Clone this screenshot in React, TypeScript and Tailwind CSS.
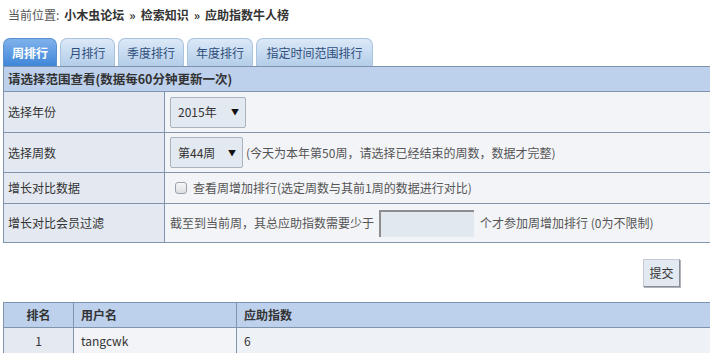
import type { ReactNode } from 'react'

const tabs = ['周排行', '月排行', '季度排行', '年度排行', '指定时间范围排行']
const tabWidths = ['w-[54px]', 'w-[55px]', 'w-[66px]', 'w-[66px]', 'w-[117px]']

function Row({ label, h, children }: { label: string; h: string; children: ReactNode }) {
  return (
    <div className={`grid grid-cols-[161px_1fr] border-b border-[#7f95ae] ${h}`}>
      <div className="flex items-center border-r border-[#7f95ae] bg-[#e4e9f1] pl-[4px] text-[#333]">
        {label}
      </div>
      <div className="flex items-center bg-[#f3f4f8] pl-[5px] text-[#555]">{children}</div>
    </div>
  )
}

function Select({ value, w, h }: { value: string; w: string; h: string }) {
  return (
    <div
      className={`flex items-center justify-between rounded-[2px] border border-[#a9b2bf] bg-[#e3e9f1] pl-[7px] pr-[6px] text-[#333] ${w} ${h}`}
    >
      <span>{value}</span>
      <span className="text-[8px] text-[#111]">▼</span>
    </div>
  )
}

export default function App() {
  return (
    <div className="h-[353px] w-[710px] overflow-hidden bg-white font-['Noto_Sans_CJK_SC','Noto_Sans',sans-serif] text-[12px]">
      {/* breadcrumb */}
      <div className="flex h-[30px] items-center pl-[8px] text-[#555]">
        当前位置:
        <span className="ml-[5px] font-bold text-[#333]">小木虫论坛</span>
        <span className="mx-[5px] font-bold text-[#333]">»</span>
        <span className="font-bold text-[#333]">检索知识</span>
        <span className="mx-[5px] font-bold text-[#333]">»</span>
        <span className="font-bold text-[#333]">应助指数牛人榜</span>
      </div>

      {/* tabs */}
      <div className="mt-[8px] flex h-[28px] items-end gap-[3px] pl-[3px]">
        {tabs.map((t, i) => (
          <div
            key={t}
            className={`flex h-[28px] items-center justify-center rounded-t-[7px] border border-b-0 ${tabWidths[i]} ${
              i === 0
                ? 'border-[#5a8fcf] bg-gradient-to-b from-[#7fb2ec] to-[#3f86d8] font-bold text-white'
                : 'border-[#a9c2de] bg-gradient-to-b from-[#dce9f7] to-[#b3cde9] text-[#2f4f7c]'
            }`}
          >
            {t}
          </div>
        ))}
      </div>

      {/* filter panel */}
      <div className="ml-[3px] w-[720px] border-l border-t border-[#7f95ae]">
        <div className="flex h-[25px] items-center border-b border-[#7f95ae] bg-[#bdd0ec] pl-[4px] text-[12.5px] font-bold text-[#333]">
          请选择范围查看(数据每60分钟更新一次)
        </div>
        <Row label="选择年份" h="h-[41px]">
          <Select value="2015年" w="w-[76px]" h="h-[31px]" />
        </Row>
        <Row label="选择周数" h="h-[40px]">
          <Select value="第44周" w="w-[73px]" h="h-[31px]" />
          <span className="ml-[3px]">(今天为本年第50周，请选择已经结束的周数，数据才完整)</span>
        </Row>
        <Row label="增长对比数据" h="h-[31px]">
          <span className="ml-[5px] mr-[6px] inline-block h-[12px] w-[12px] rounded-[3px] border border-[#9aa3ad] bg-gradient-to-b from-[#f7f7f7] to-[#dcdfe3]" />
          查看周增加排行(选定周数与其前1周的数据进行对比)
        </Row>
        <Row label="增长对比会员过滤" h="h-[39px]">
          截至到当前周，其总应助指数需要少于
          <span className="ml-[5px] mr-[6px] inline-block h-[27px] w-[95px] border-l-2 border-t-2 border-l-[#8d8d8d] border-t-[#8d8d8d] bg-[#e2e8f0]" />
          个才参加周增加排行 (0为不限制)
        </Row>
      </div>

      {/* submit */}
      <div className="mt-[16px] flex justify-end pr-[30px]">
        <button className="h-[28px] w-[37px] border border-[#c5cbd3] border-b-[#8a8f96] border-r-[#8a8f96] bg-[#e3e9f1] text-[12px] text-[#333] shadow-[1px_1px_0_#b0b4ba]">
          提交
        </button>
      </div>

      {/* ranking table */}
      <div className="ml-[3px] mt-[15px] w-[720px] border-l border-t border-[#7f95ae]">
        <div className="grid h-[25px] grid-cols-[70px_163px_1fr] border-b border-[#7f95ae] bg-[#bdd0ec] font-bold text-[#333]">
          <div className="flex items-center justify-center border-r border-[#7f95ae]">排名</div>
          <div className="flex items-center border-r border-[#7f95ae] pl-[7px]">用户名</div>
          <div className="flex items-center pl-[7px]">应助指数</div>
        </div>
        <div className="grid h-[26px] grid-cols-[70px_163px_1fr] border-b border-[#7f95ae] text-[#333]">
          <div className="flex items-center justify-center border-r border-[#7f95ae] bg-[#e5e9f0]">1</div>
          <div className="flex items-center border-r border-[#7f95ae] bg-[#f3f4f8] pl-[7px]">tangcwk</div>
          <div className="flex items-center bg-[#eef1f5] pl-[7px]">6</div>
        </div>
      </div>
    </div>
  )
}
